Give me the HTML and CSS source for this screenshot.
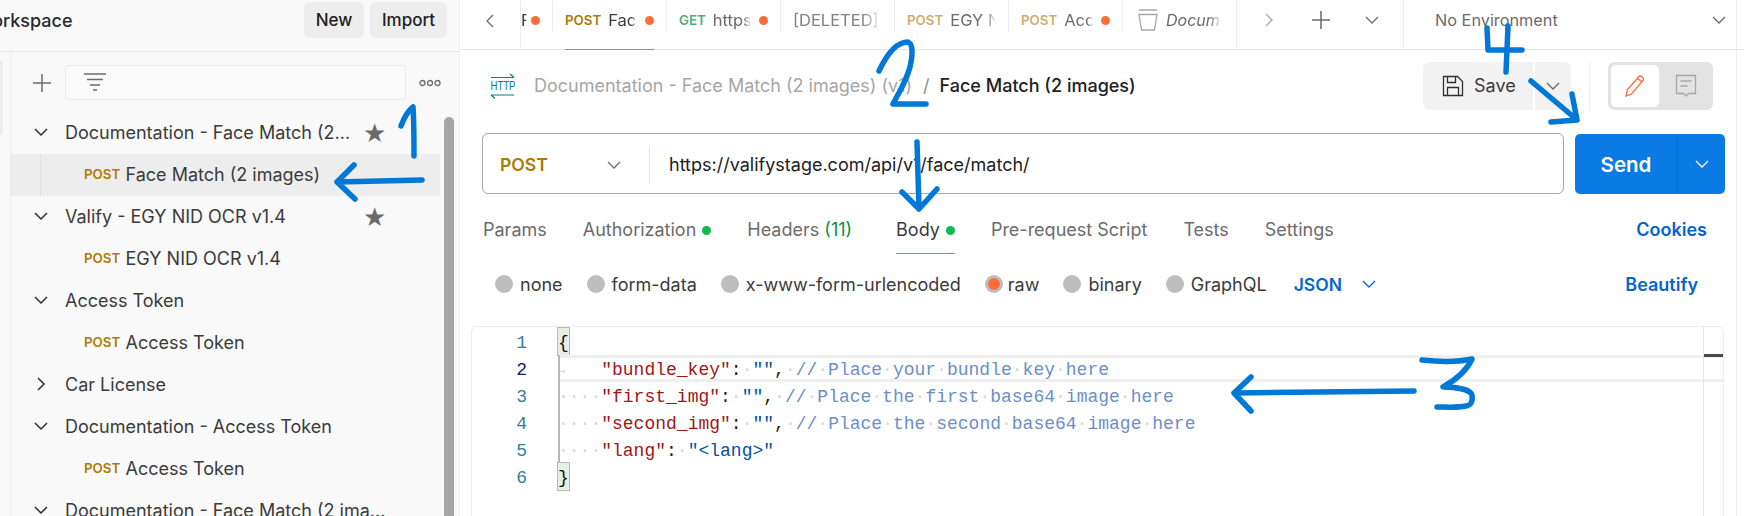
FILE: index.html
```html
<!DOCTYPE html>
<html lang="en">
<head>
<meta charset="utf-8">
<title>Face Match (2 images)</title>
<link rel="stylesheet" href="styles.css">
</head>
<body>
<div class="app">
  <aside class="sidebar">
    <header class="side-head">
      <span class="ws-name">Workspace</span>
      <button class="btn btn-new">New</button>
      <button class="btn btn-import">Import</button>
    </header>
    <div class="side-body">
      <div class="rail"><span class="rail-item"></span></div>
      <div class="tree-pane">
        <div class="tree-tools">
          <svg class="i-plus" width="20" height="20" viewBox="0 0 20 20"><path d="M10 1v18M1 10h18"/></svg>
          <div class="filter">
            <svg width="24" height="20" viewBox="0 0 24 20"><path d="M1 2h22M4 7.500h16M7 13h10M10 18h4"/></svg>
          </div>
          <svg class="i-more" width="22" height="8" viewBox="0 0 22 8"><circle cx="3.500" cy="4" r="2.500"/><circle cx="11" cy="4" r="2.500"/><circle cx="18.500" cy="4" r="2.500"/></svg>
        </div>
        <div class="tree">
          <div class="row folder"><svg class="chev" viewBox="0 0 14 14"><path d="M1 4l6 6 6-6"/></svg><span class="name">Documentation - Face Match (2...</span><span class="star">★</span></div>
          <div class="row req selected"><span class="guide"></span><span class="post">POST</span><span class="name">Face Match (2 images)</span></div>
          <div class="row folder"><svg class="chev" viewBox="0 0 14 14"><path d="M1 4l6 6 6-6"/></svg><span class="name">Valify - EGY NID OCR v1.4</span><span class="star star-b">★</span></div>
          <div class="row req"><span class="post">POST</span><span class="name">EGY NID OCR v1.4</span></div>
          <div class="row folder"><svg class="chev" viewBox="0 0 14 14"><path d="M1 4l6 6 6-6"/></svg><span class="name">Access Token</span></div>
          <div class="row req"><span class="post">POST</span><span class="name">Access Token</span></div>
          <div class="row folder"><svg class="chev" viewBox="0 0 14 14"><path d="M4 1l6 6-6 6"/></svg><span class="name">Car License</span></div>
          <div class="row folder"><svg class="chev" viewBox="0 0 14 14"><path d="M1 4l6 6 6-6"/></svg><span class="name">Documentation - Access Token</span></div>
          <div class="row req"><span class="post">POST</span><span class="name">Access Token</span></div>
          <div class="row folder"><svg class="chev" viewBox="0 0 14 14"><path d="M1 4l6 6 6-6"/></svg><span class="name">Documentation - Face Match (2 ima...</span></div>
        </div>
        <div class="scrollbar"></div>
      </div>
    </div>
  </aside>

  <main class="main">
    <nav class="tabbar">
      <div class="tab-prev"><svg class="chev-s" viewBox="0 0 14 14"><path d="M10 1L4 7l6 6"/></svg></div>
      <div class="tab tab-first"><span class="tname fade">F</span><span class="dot"></span></div>
      <div class="tab active"><span class="m-post">POST</span><span class="tname fade">Face</span><span class="dot"></span></div>
      <div class="tab"><span class="m-get">GET</span><span class="tname fade t-grey">https</span><span class="dot"></span></div>
      <div class="tab"><span class="tname fade t-del">[DELETED]</span></div>
      <div class="tab"><span class="m-post dim">POST</span><span class="tname fade t-grey">EGY N</span></div>
      <div class="tab"><span class="m-post dim">POST</span><span class="tname fade t-grey">Acc</span><span class="dot"></span></div>
      <div class="tab tab-doc">
        <svg class="i-trash" width="20" height="22" viewBox="0 0 20 22"><path d="M1 1h18M1 5.500h18l-2.500 15.500h-13z"/></svg>
        <span class="tname fade t-doc">Docum</span>
      </div>
      <div class="tab-actions">
        <svg class="chev-s next" viewBox="0 0 14 14"><path d="M4 1l6 6-6 6"/></svg>
        <svg class="i-plus2" width="18" height="18" viewBox="0 0 18 18"><path d="M9 0v18M0 9h18"/></svg>
        <svg class="chev-s drop" viewBox="0 0 14 14"><path d="M1 4l6 6 6-6"/></svg>
      </div>
      <div class="env"><span>No Environment</span><svg class="chev-s" viewBox="0 0 14 14"><path d="M1 4l6 6 6-6"/></svg></div>
    </nav>

    <section class="crumb-row">
      <svg class="i-http" width="26" height="26" viewBox="0 0 26 26">
        <path class="ln" d="M1 4.500h23M20 1l4 3.500M1 22h23M1 22l4 3.500"/>
        <text x="0.500" y="17" class="http-t" textLength="25" lengthAdjust="spacingAndGlyphs">HTTP</text>
      </svg>
      <span class="crumb">Documentation - Face Match (2 images) (v1)</span>
      <span class="crumb-sep">/</span>
      <span class="crumb-cur">Face Match (2 images)</span>
      <div class="crumb-actions">
        <button class="save">
          <svg width="22" height="22" viewBox="0 0 22 22"><path d="M1.500 1.500h14l5 5v14h-19zM5.500 1.500v6h8v-6M5.500 20.500v-8h11v8"/></svg>
          <span>Save</span>
        </button>
        <button class="save-drop"><svg class="chev-s" viewBox="0 0 14 14"><path d="M1 4l6 6 6-6"/></svg></button>
        <span class="vsep"></span>
        <div class="toggle">
          <span class="tog on"><svg width="22" height="24" viewBox="0 0 22 24"><path d="M2 22l1.500-6.500L15 2.500c1.500-1.500 5.500 1.500 4.500 3.500L7.500 20zM13.500 4.500l4.500 3.500"/></svg></span>
          <span class="tog"><svg width="22" height="24" viewBox="0 0 22 24"><path d="M1.500 1.500h19v18h-7l-2.500 2.500-2.500-2.500h-7zM5.500 7h11M5.500 12h7"/></svg></span>
        </div>
      </div>
    </section>

    <section class="url-row">
      <div class="url-box">
        <div class="method"><span>POST</span><svg class="chev-s" viewBox="0 0 14 14"><path d="M1 4l6 6 6-6"/></svg></div>
        <div class="url">https://valifystage.com/api/v1/face/match/</div>
      </div>
      <div class="send"><span class="send-l">Send</span><span class="send-r"><svg class="chev-s" viewBox="0 0 14 14"><path d="M1 4l6 6 6-6"/></svg></span></div>
    </section>

    <section class="req-tabs">
      <span class="rt">Params</span>
      <span class="rt">Authorization<i class="gdot"></i></span>
      <span class="rt">Headers <em>(11)</em></span>
      <span class="rt rt-on">Body<i class="gdot"></i></span>
      <span class="rt">Pre-request Script</span>
      <span class="rt">Tests</span>
      <span class="rt">Settings</span>
      <span class="link cookies">Cookies</span>
    </section>

    <section class="body-opts">
      <label class="opt"><i class="radio"></i>none</label>
      <label class="opt"><i class="radio"></i>form-data</label>
      <label class="opt"><i class="radio"></i>x-www-form-urlencoded</label>
      <label class="opt opt-on"><i class="radio radio-on"></i>raw</label>
      <label class="opt"><i class="radio"></i>binary</label>
      <label class="opt"><i class="radio"></i>GraphQL</label>
      <span class="link json">JSON<svg class="chev-s" viewBox="0 0 14 14"><path d="M1 4l6 6 6-6"/></svg></span>
      <span class="link beautify">Beautify</span>
    </section>

    <section class="editor">
      <div class="gutter"><div>1</div><div class="cur">2</div><div>3</div><div>4</div><div>5</div><div>6</div></div>
      <div class="code">
        <div class="ln-c"><span class="brace">{</span></div>
        <div class="ln-c active-line in"><span class="ws tabarrow">→</span><span class="k">"bundle_key"</span><span class="p">:</span><span class="ws">·</span><span class="v">""</span><span class="p">,</span><span class="ws">·</span><span class="c">//<span class="ws">·</span>Place<span class="ws">·</span>your<span class="ws">·</span>bundle<span class="ws">·</span>key<span class="ws">·</span>here</span></div>
        <div class="ln-c in"><span class="ws">····</span><span class="k">"first_img"</span><span class="p">:</span><span class="ws">·</span><span class="v">""</span><span class="p">,</span><span class="ws">·</span><span class="c">//<span class="ws">·</span>Place<span class="ws">·</span>the<span class="ws">·</span>first<span class="ws">·</span>base64<span class="ws">·</span>image<span class="ws">·</span>here</span></div>
        <div class="ln-c in"><span class="ws">····</span><span class="k">"second_img"</span><span class="p">:</span><span class="ws">·</span><span class="v">""</span><span class="p">,</span><span class="ws">·</span><span class="c">//<span class="ws">·</span>Place<span class="ws">·</span>the<span class="ws">·</span>second<span class="ws">·</span>base64<span class="ws">·</span>image<span class="ws">·</span>here</span></div>
        <div class="ln-c in"><span class="ws">····</span><span class="k">"lang"</span><span class="p">:</span><span class="ws">·</span><span class="v">"&lt;lang&gt;"</span></div>
        <div class="ln-c"><span class="brace">}</span></div>
      </div>
      <div class="minimap"><span class="mark"></span></div>
    </section>
  </main>
  <div class="edge"></div>
</div>

<svg class="scribbles" width="1744" height="516" viewBox="0 0 1744 516" role="img" aria-label="Hand-drawn blue step annotations">
  <path d="M401 126C404 118 409 110 413 107C414 122 414 140 414 156"/>
  <path d="M422 180L337 182M354 165L337 182L355 199"/>
  <path d="M879 71C886 56 895 42 908 42C914 44 912 58 910 67C906 82 898 94 893 104L926 104"/>
  <path d="M917 142L919 208M902 192L919 209L937 189"/>
  <path d="M1487 28L1488 50L1522 50M1508 26L1506 72"/>
  <path d="M1531 81L1576 119M1572 94L1577 120L1551 122"/>
  <path d="M1422 360C1440 362 1458 362 1472 359C1466 372 1452 382 1443 387C1455 387 1470 389 1472 395C1473 402 1471 405 1466 406C1456 408 1446 407 1437 407"/>
  <path d="M1414 391L1234 393M1251 377L1234 393L1251 411"/>
</svg>
</body>
</html>
```

FILE: styles.css
```css
* { box-sizing: border-box; }
html, body { margin: 0; padding: 0; }
body {
  width: 1744px;
  height: 516px;
  overflow: hidden;
  background: #fff;
  font-family: Inter, "Noto Sans", sans-serif;
  font-size: 18px;
  color: #212121;
  position: relative;
}
svg { display: block; flex: none; }
button { font: inherit; border: 0; }
i, em { font-style: normal; }

.app { display: flex; height: 516px; }

/* Sidebar */
.sidebar {
  width: 460px;
  flex: none;
  background: #f9f9f9;
  border-right: 1px solid #ededed;
  display: flex;
  flex-direction: column;
}
.side-head {
  height: 52px;
  flex: none;
  border-bottom: 1px solid #e6e6e6;
  display: flex;
  align-items: flex-start;
  padding: 2px 12px 0 0;
  overflow: hidden;
}
.ws-name {
  margin: 7px auto 0 -25px;
  font-size: 18px;
  font-weight: 500;
  line-height: 24px;
  color: #2a2a2a;
}
.btn {
  height: 36px;
  border-radius: 6px;
  background: #ededed;
  color: #212121;
  font-weight: 500;
  font-size: 17px;
  padding: 0;
}
.btn-new { width: 60px; margin-right: 6px; }
.btn-import { width: 77px; }

.side-body { flex: 1; display: flex; min-height: 0; }
.rail {
  width: 11px;
  flex: none;
  border-right: 1px solid #ededed;
  padding-top: 8px;
}
.rail-item {
  display: block;
  width: 3px;
  height: 75px;
  background: #ededed;
  border-radius: 0 3px 3px 0;
}
.tree-pane { flex: 1; position: relative; min-width: 0; overflow: hidden; }
.tree-tools {
  height: 50px;
  display: flex;
  align-items: center;
  padding: 11px 0 0 21px;
}
.i-plus path { stroke: #6b6b6b; stroke-width: 1.5; fill: none; }
.filter {
  width: 341px;
  height: 35px;
  margin-left: 13px;
  border: 1px solid #e9e9e9;
  border-radius: 3px;
  background: #fafafa;
  padding: 6px 0 0 17px;
}
.filter path { stroke: #6b6b6b; stroke-width: 1.4; fill: none; }
.i-more { margin-left: 13px; }
.i-more circle { fill: none; stroke: #6b6b6b; stroke-width: 1.3; }

.tree { width: 429px; margin-top: 10px; }
.row {
  height: 42px;
  display: flex;
  align-items: center;
  position: relative;
  white-space: nowrap;
  color: #3b3b3b;
  font-size: 18px;
  padding-bottom: 2px;
}
.folder { padding-left: 23px; }
.chev { width: 14px; height: 14px; margin-right: 17px; }
.chev path { fill: none; stroke: #2e2e2e; stroke-width: 1.500; }
.star {
  position: absolute;
  left: 352px;
  top: 8px;
  font-family: "DejaVu Sans", sans-serif;
  font-size: 26px;
  line-height: 26px;
  color: #6b6b6b;
}
.req { padding-left: 73px; }
.selected { background: #ededed; }
.guide {
  position: absolute;
  left: 29px;
  top: 0;
  bottom: 0;
  width: 1px;
  background: #e0e0e0;
}
.post {
  color: #ad7a03;
  font-size: 13.300px;
  font-weight: 600;
  width: 41.500px;
  flex: none;
}
.scrollbar {
  position: absolute;
  left: 433px;
  top: 65px;
  bottom: 0;
  width: 10px;
  background: #a6a6a6;
  border-radius: 5px 5px 0 0;
}

/* Main */
.main { flex: none; width: 1276px; display: flex; flex-direction: column; }
.edge { flex: 1; border-left: 1px solid #ededed; }

.tabbar {
  height: 50px;
  flex: none;
  display: flex;
  align-items: stretch;
  margin-right: -8px;
  border-bottom: 1px solid #e6e6e6;
  font-size: 16.500px;
}
.tab-prev {
  width: 61px;
  flex: none;
  border-right: 1px solid #ededed;
  display: flex;
  align-items: center;
  padding: 0 0 8px 23px;
}
.chev-s { width: 14px; height: 14px; }
.chev-s path { fill: none; stroke: #6b6b6b; stroke-width: 1.300; }
.tab {
  width: 114px;
  flex: none;
  display: flex;
  align-items: center;
  gap: 7px;
  padding: 0 13.500px 9px 12px;
  position: relative;
  white-space: nowrap;
}
.tab::after {
  content: "";
  position: absolute;
  right: 0;
  top: 0;
  height: 32px;
  width: 1px;
  background: #ededed;
}
.tab-first { width: 32px; padding: 0 0 9px 0; gap: 4px; }
.tab-first .tname { width: 6px; flex: none; }
.active::before {
  content: "";
  position: absolute;
  left: 12px;
  width: 89px;
  bottom: -1px;
  height: 1px;
  background: #ff6c37;
}
.m-post, .m-get { font-size: 13.300px; font-weight: 600; flex: none; }
.m-post { color: #ad7a03; }
.m-post.dim { color: #cfae6c; }
.m-get { color: #54ad78; }
.tname { flex: 1; min-width: 0; overflow: hidden; color: #3b3b3b; }
.fade {
  -webkit-mask-image: linear-gradient(to right, #000 78%, transparent);
  mask-image: linear-gradient(to right, #000 78%, transparent);
}
.t-grey { color: #6b6b6b; }
.t-del { color: #808080; }
.t-doc { color: #6b6b6b; font-style: italic; font-size: 16px; }
.dot { width: 9px; height: 9px; border-radius: 50%; background: #ff6c37; flex: none; }
.i-trash path { fill: none; stroke: #a6a6a6; stroke-width: 1.300; }
.tab-doc { gap: 8px; padding-left: 15px; padding-right: 15px; }
.tab-doc::after { height: 49px; }
.tab-actions {
  width: 167px;
  flex: none;
  display: flex;
  align-items: center;
  border-right: 1px solid #ededed;
  padding: 0 0 9px 25px;
}
.chev-s.next path { stroke: #a6a6a6; }
.i-plus2 { margin-left: 36px; }
.i-plus2 path { stroke: #6b6b6b; stroke-width: 1.500; fill: none; }
.chev-s.drop { margin-left: 35px; }
.env {
  flex: 1;
  display: flex;
  align-items: center;
  justify-content: space-between;
  padding: 0 18px 9px 31px;
  color: #6b6b6b;
  font-size: 16.300px;
}

.crumb-row {
  height: 83px;
  flex: none;
  display: flex;
  align-items: flex-start;
  padding: 12px 0 0 30px;
  line-height: 48px;
  white-space: nowrap;
}
.i-http { margin: 11px 18px 0 0; }
.i-http .ln { fill: none; stroke: #097d8a; stroke-width: 1.200; }
.http-t { font-family: "Liberation Sans", sans-serif; font-size: 12px; fill: #097d8a; }
.crumb { color: #a6a6a6; }
.crumb-sep { color: #8c8c8c; margin: 0 10px 0 11px; }
.crumb-cur { color: #212121; font-weight: 500; }
.crumb-actions { margin-left: auto; display: flex; align-items: flex-start; }
.save {
  width: 110px;
  height: 48px;
  background: #f2f2f2;
  border-radius: 6px 0 0 6px;
  display: flex;
  align-items: center;
  padding-left: 19px;
  gap: 10px;
  color: #3b3b3b;
  font-size: 18px;
}
.save path { fill: none; stroke: #2e2e2e; stroke-width: 1.300; }
.save-drop {
  width: 36px;
  height: 48px;
  margin-left: 2px;
  background: #f2f2f2;
  border-radius: 0 6px 6px 0;
  display: flex;
  align-items: center;
  justify-content: center;
  padding: 0;
}
.vsep { width: 1px; height: 48px; background: #ededed; margin: 0 18px; }
.toggle {
  width: 105px;
  height: 48px;
  background: #e3e3e3;
  border-radius: 6px;
  margin-right: 23px;
  display: flex;
  padding: 3px;
}
.tog {
  width: 48px;
  height: 42px;
  border-radius: 5px;
  display: flex;
  align-items: center;
  justify-content: center;
}
.tog path { fill: none; stroke: #a6a6a6; stroke-width: 1.300; }
.tog.on { background: #fff; }
.tog.on path { stroke: #ff6c37; }
.tog + .tog { margin-left: 3px; }

.url-row {
  height: 61px;
  flex: none;
  display: flex;
  padding-left: 22px;
  gap: 11px;
}
.url-box {
  width: 1082px;
  border: 1px solid #a6a6a6;
  border-radius: 6px;
  display: flex;
  align-items: center;
  padding-top: 2px;
}
.method {
  width: 167px;
  height: 36px;
  flex: none;
  border-right: 1px solid #e6e6e6;
  display: flex;
  align-items: center;
  padding-left: 17px;
  color: #ad7a03;
  font-weight: 600;
  font-size: 17.600px;
}
.method svg { margin-left: 59px; }
.url { padding-left: 19px; color: #212121; white-space: nowrap; }
.send {
  width: 150px;
  height: 60px;
  margin-top: 1px;
  background: #0b7ae5;
  border-radius: 5px;
  display: flex;
  align-items: center;
  color: #fff;
  font-weight: 600;
  font-size: 20.500px;
}
.send-l { width: 102px; text-align: center; }
.send-r {
  flex: 1;
  height: 100%;
  border-left: 1px solid #0a6cce;
  display: flex;
  align-items: center;
  justify-content: center;
}
.send-r path { stroke: #fff; }

.req-tabs {
  height: 60px;
  flex: none;
  display: flex;
  padding: 26px 0 0 23px;
  gap: 36px;
  color: #6b6b6b;
  white-space: nowrap;
  line-height: 20px;
}
.rt { display: block; position: relative; height: 34px; }
.rt em { color: #0a8f3c; }
.rt-on { color: #3b3b3b; margin-left: 8px; }
.rt-on::after {
  content: "";
  position: absolute;
  left: 0;
  right: 0;
  bottom: 0;
  height: 1px;
  background: #ff6c37;
}
.gdot {
  display: inline-block;
  width: 9px;
  height: 9px;
  border-radius: 50%;
  background: #0cbb52;
  margin-left: 6px;
  vertical-align: 1px;
}
.link { color: #0265d2; font-weight: 600; }
.cookies { margin-left: auto; margin-right: 29px; }

.body-opts {
  height: 60px;
  flex: none;
  display: flex;
  align-items: center;
  padding: 0 0 0 35px;
  gap: 24px;
  color: #3b3b3b;
  white-space: nowrap;
  margin-bottom: 12px;
}
.opt { display: flex; align-items: center; gap: 7px; }
.opt-on { gap: 5px; }
.radio {
  width: 18px;
  height: 18px;
  border-radius: 50%;
  background: #bdbdbd;
  flex: none;
  display: block;
}
.radio-on {
  background: #ff6c37;
  border: 3px solid #bdbdbd;
}
.json { display: flex; align-items: center; gap: 20px; margin-left: 3px; font-size: 17.500px; }
.json path { stroke: #0265d2; }
.beautify { margin-left: auto; margin-right: 38px; }

.editor {
  flex: 1;
  min-height: 0;
  margin: 0 12px 0 11px;
  border: 1px solid #ededed;
  border-bottom: 0;
  border-radius: 6px 6px 0 0;
  display: flex;
  font-family: "Liberation Mono", monospace;
  font-size: 18px;
  line-height: 31px;
}
.gutter {
  width: 60px;
  flex: none;
  text-align: right;
  padding: 1px 5px 0 0;
  color: #2f7f96;
}
.gutter div { height: 27px; }
.gutter .cur { color: #0b216f; }
.code { flex: 1; min-width: 0; padding: 1px 0 0 26px; }
.ln-c { height: 27px; white-space: pre; position: relative; }
.in::before {
  content: "";
  position: absolute;
  left: 0;
  top: 0;
  bottom: 0;
  width: 2px;
  background: #b8b8b8;
}
.active-line {
  box-shadow: inset 0 3px 0 #efefef, inset 0 -3px 0 #efefef;
  margin-right: -20px;
}
.brace {
  display: inline-block;
  width: 10.800px;
  height: 27px;
  background: #e6efe3;
  outline: 1px solid #b8b8b8;
  color: #111;
  vertical-align: top;
}
.ws { color: #d8d8d8; }
.tabarrow { display: inline-block; width: 43.200px; font-family: "DejaVu Sans Mono", monospace; font-size: 12px; }
.k { color: #a31515; }
.v { color: #0451a5; }
.c { color: #6a8fc8; }
.p { color: #212121; }
.minimap {
  width: 20px;
  flex: none;
  border-left: 1px solid #e6e6e6;
  position: relative;
}
.mark {
  position: absolute;
  left: 0;
  right: 0;
  top: 27px;
  height: 3px;
  background: #4a4a4a;
}

/* Hand-drawn annotation layer over the screenshot */
.scribbles { position: absolute; left: 0; top: 0; pointer-events: none; }
.scribbles path {
  fill: none;
  stroke: #0078d7;
  stroke-width: 5.500;
  stroke-linecap: round;
  stroke-linejoin: round;
}
```
